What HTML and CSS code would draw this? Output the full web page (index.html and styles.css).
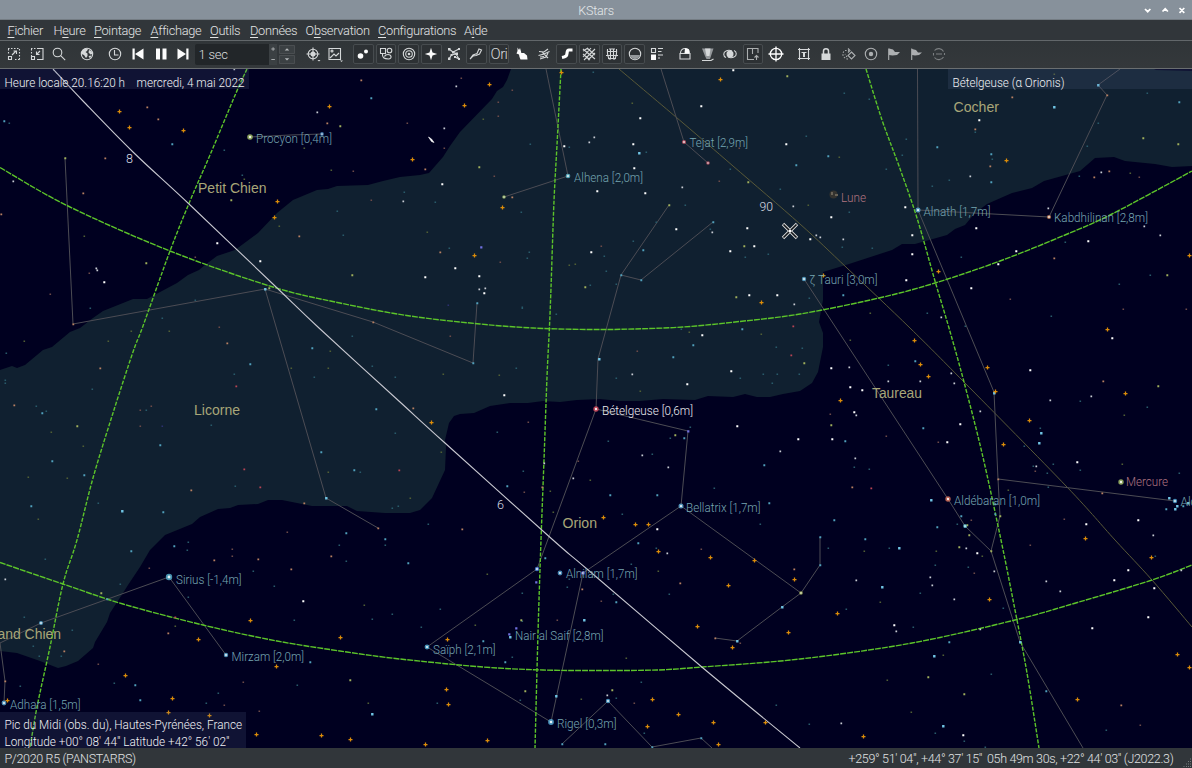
FILE: index.html
```html
<!DOCTYPE html>
<html lang="fr">
<head>
<meta charset="utf-8">
<title>KStars</title>
<link rel="stylesheet" href="styles.css">
</head>
<body>
<div class="window">
  <header class="titlebar">
    <span class="title">KStars</span>
    <svg class="winbtns" viewBox="0 0 48 20" width="48" height="20"><path d="M4 9l2.700 2.700 2.700-2.700M21.500 11.500l2.700-2.700 2.700 2.700M38.500 8l4.800 4.800M43.300 8l-4.800 4.800"/></svg>
  </header>
  <nav class="menubar">
    <span class="m1"><u>F</u>ichier</span><span class="m2">H<u>e</u>ure</span><span class="m3"><u>P</u>ointage</span><span class="m4"><u>A</u>ffichage</span><span class="m5"><u>O</u>utils</span><span class="m6"><u>D</u>onnées</span><span class="m7">O<u>b</u>servation</span><span class="m8"><u>C</u>onfigurations</span><span class="m9">A<u>i</u>de</span>
  </nav>
  <div class="toolbar">
    <i><svg viewBox="0 0 16 16"><path stroke-dasharray="1.500 1.500" d="M2 2.500h12M13.500 3v11M2.500 3v5M9 13.500h5"/><path d="M2.500 10.500h3v3h-3zM6 9l4-4M7.500 5h3v3"/></svg></i>
    <i><svg viewBox="0 0 16 16"><path stroke-dasharray="1.500 1.500" d="M2 2.500h8M2.500 3v7"/><path d="M9 2.500h5v11H8M2.500 10.500h3v3h-3zM11 5L7.500 8.500M7.500 5.500v3h3"/></svg></i>
    <i><svg viewBox="0 0 16 16"><circle cx="6.500" cy="6.500" r="4.300"/><path d="M9.700 9.700l4.500 4.500"/></svg></i>
    <b></b>
    <i><svg viewBox="0 0 16 16"><circle cx="8" cy="8" r="5.700"/><path class="f" d="M3 5l3-2.500 3 .5-1 2-1.500 1 2 1.500v2.500L7 12l-2-3-2.500-1zM10 4l2.500 1 1 3-2 .5-2-2zM9.500 10l3-.5-1.500 3z"/></svg></i>
    <b></b>
    <i><svg viewBox="0 0 16 16"><circle cx="8" cy="8" r="5.700"/><path d="M7.500 4v5h4"/></svg></i>
    <i><svg viewBox="0 0 16 16"><path class="w" d="M2.500 2.500h2.200v11H2.500zM13.500 2.500v11L5 8z"/></svg></i>
    <i><svg viewBox="0 0 16 16"><path class="w" d="M3 2.500h4v11H3zM9.500 2.500h4v11h-4z"/></svg></i>
    <i><svg viewBox="0 0 16 16"><path class="w" d="M11.300 2.500h2.200v11h-2.200zM2.500 2.500v11L11 8z"/></svg></i>
    <div class="step"><span>1 sec</span></div>
    <svg class="spin" viewBox="0 0 8 21" width="8" height="21"><path d="M2.300 5h3.600M4.100 3.300v3.500M2.300 15.500h3.600"/></svg>
    <div class="updown"><svg viewBox="0 0 16 10"><path class="f" d="M5.500 6L8 3.500 10.500 6z"/></svg><svg viewBox="0 0 16 10"><path class="f" d="M5.500 3.500L8 6l2.500-2.500z"/></svg></div>
    <i class="first"><svg viewBox="0 0 16 16"><circle cx="8" cy="8" r="4.800"/><circle class="f" cx="8" cy="8" r="2.500"/><path d="M8 1.500v13M1.500 8h13"/><path class="f" d="M12.500 14l1.500 1.500 1.500-1.500z"/></svg></i>
    <i><svg viewBox="0 0 16 16"><path d="M2 2.500h11.500v11H2zM3 12l4-4 2 2 3-3"/><circle cx="5" cy="5" r="1"/><path class="f" d="M13 14.500l1.500 1.500 1.500-1.500z"/></svg></i>
    <b></b>
    <i class="on"><svg viewBox="0 0 16 16"><circle class="w" cx="5.500" cy="10" r="2.800"/><circle class="w" cx="11" cy="5.500" r="2"/></svg></i>
    <i class="on"><svg viewBox="0 0 16 16"><path d="M2.500 2.500h5v5h-5z"/><circle cx="11.500" cy="4.500" r="2.300"/><path d="M4.500 7.500c-.5 4 1.500 5.500 6 5.500 4-.5 3-4.500-.5-4.500-2 0-3 .5-3.500 2"/></svg></i>
    <i class="on"><svg viewBox="0 0 16 16"><circle cx="8" cy="8" r="5.700"/><circle cx="8" cy="8" r="3.300"/><circle class="f" cx="8" cy="8" r="1.300"/></svg></i>
    <i class="on"><svg viewBox="0 0 16 16"><path class="w" d="M8 1.800L9.500 6.500 14.200 8 9.500 9.500 8 14.200 6.500 9.500 1.800 8l4.700-1.500z"/></svg></i>
    <i><svg viewBox="0 0 16 16"><path d="M3 3l4 3 6-3M7 6l3 2 3 5M5.500 9L3 13M5.500 9L10 8M9 11l4 2"/><path class="f" d="M2 2h2.500v2.500H2zM12 2h2v2h-2zM2 11.500h2.500V14H2zM12 12h2v2h-2zM6 5h2.500v2.500H6zM4.500 8h2v2h-2zM9.500 6.500H12V9H9.500zM8 10h2v2H8z"/></svg></i>
    <i class="on"><svg viewBox="0 0 16 16"><path d="M2 13l3-4 4-1.500L11 3l2.500 1-2 4L8 9.500 5 10z"/></svg></i>
    <i class="on"><span class="ori">Ori</span></i>
    <i><svg viewBox="0 0 16 16"><path class="w" d="M3.500 1.500L5 4 6 2l1 3.500.3 1.500L10 7l3 2.500.5 4H6.500L5.500 11 5 8.500 2.500 7.500 3.500 5z"/></svg></i>
    <i><svg viewBox="0 0 16 16"><path d="M3 5.500l5 .5 4-3M2.500 9.500L8 8l5.500-2.500M4 13l6-2 2-4M12 12l-3-3-3-3M8 10.500l-4 .5"/></svg></i>
    <i class="on"><svg viewBox="0 0 16 16"><path class="river" d="M13.500 4H10c-3 0-1 4.500-3 6-1 .8-2.500 1.200-4 1.500"/></svg></i>
    <i class="on"><svg viewBox="0 0 16 16"><path d="M2 3l12 10M2 8l7 6M6 2l8 7M14 3L3 14M14 7l-7 7M10 2L2 11M2 5l5-3"/></svg></i>
    <i class="on"><svg viewBox="0 0 16 16"><path d="M2 9.500h12M3 5.500h10M4 12.500h8M3.500 3C3 8 4 11 5.500 13.500M6.500 3v10.500M9.500 3v10.500M12.500 3c.5 5-.5 8-2 10.500M5 3h6"/></svg></i>
    <i class="on"><svg viewBox="0 0 16 16"><circle cx="8" cy="8" r="5.700"/><path class="f mute" d="M3 9h10c-1 5.500-9 5.500-10 0z"/></svg></i>
    <i><svg viewBox="0 0 16 16"><path d="M2.500 2.500h4v4h-4zM9 2.500h5M9 5.500h3.500M9 9h5M9 12h2"/><path class="w" d="M2 8.500h5v5.500H2z"/></svg></i>
    <b></b>
    <i><svg viewBox="0 0 16 16"><path d="M3 7.500h10v5.500H3zM3.500 7C3.500 1 12.500 1 12.500 7"/><path class="w" d="M8 2l4 1.500v4H7.500z"/></svg></i>
    <i><svg viewBox="0 0 16 16"><path class="f mute" d="M2 2.500h11.500L11 10l-1 3H6.500L5 10z"/><path class="f" d="M5 2.500h5.500L9.500 10h-3z"/><path d="M2 14.500h9l2.500-1.500"/></svg></i>
    <i><svg viewBox="0 0 16 16"><ellipse class="f" cx="8" cy="8" rx="3.500" ry="3.500"/><path d="M4 11.500C1 10.500 1 6 4 5c2-1 4-1 6 0M12 4.500c3 1 3 5.500 0 6.500-2 1-4 1-6 0"/></svg></i>
    <i class="on"><svg viewBox="0 0 16 16" class="dim"><path d="M13 7V2.500H2.500v11H9M7.500 3v5M11.500 14V9.500M9.500 11.500l2-2 2 2"/></svg></i>
    <i><svg viewBox="0 0 16 16" class="target"><circle cx="8" cy="8" r="5.700"/><path d="M8 .5v15M.5 8h15"/></svg></i>
    <b></b>
    <i><svg viewBox="0 0 16 16"><path d="M3.500 2v12M12.500 2v12M2 3.500h12M2 12.500h12M5.500 6.500h5"/><path class="f" d="M7 6h2v5H7z"/></svg></i>
    <i><svg viewBox="0 0 16 16"><path class="f" d="M3.500 7.500h9V14h-9z"/><path class="shackle" d="M5.500 8V5c0-3 5-3 5 0v3"/></svg></i>
    <i><svg viewBox="0 0 16 16" class="dim"><path stroke-dasharray="1.500 1.500" d="M7 13C2 12.500 0 7 4 4.500h4M6 11L4 8"/><path d="M7 2.500L9 4.500 7 6.500M10.500 6l3.500 3.500-3.500 3.500L7 9.500z"/></svg></i>
    <i><svg viewBox="0 0 16 16" class="dim"><circle cx="8" cy="8" r="5.700"/><circle class="f" cx="8" cy="8" r="2.200"/></svg></i>
    <i><svg viewBox="0 0 16 16" class="dim"><path class="f" d="M3 2.500l4 1 2 2.500h5l-3 3-4.500.5L3 9z"/><path d="M2.700 2.500V14"/></svg></i>
    <i><svg viewBox="0 0 16 16" class="dim"><path class="f" d="M3 3l4 1 2 2.500h4l-3 2.500-4 .5L3 9z"/><path d="M2.700 2.500V14"/></svg></i>
    <i><svg viewBox="0 0 16 16" class="dimmer"><path d="M3.500 4.500a5.500 5.500 0 0 1 9 1M12.500 11a5.500 5.500 0 0 1-9 .5M2.500 7v2.500M13.500 7v2M5 8h6"/></svg></i>
  </div>
  <main class="sky"><svg id="map" viewBox="0 69 1192 679" width="1192" height="679"></svg></main>
  <footer class="status"><span class="left">P/2020 R5 (PANSTARRS)</span><span class="azalt">+259° 51' 04", +44° 37' 15"</span><span class="radec">05h 49m 30s, +22° 44' 03" (J2022.3)</span>
    <svg class="grip" viewBox="0 0 10 10" width="10" height="10"><path d="M8 1h1M6 3.500h1M8 3.500h1M4 6h1M6 6h1M8 6h1M1.500 8.500h1M4 8.500h1M6 8.500h1M8 8.500h1"/></svg>
  </footer>
</div>
<script src="map.js"></script>
</body>
</html>
```
FILE: styles.css
```css
body { margin: 0; background: #000020; font-family: Roboto, "Noto Sans", sans-serif; font-weight: 300; }
.window { width: 1192px; height: 768px; display: flex; flex-direction: column; overflow: hidden; }
.titlebar { height: 20px; flex: none; box-sizing: border-box; background: #87919b; border-bottom: 1px solid #747c83; display: grid; grid-template-columns: 1fr auto 1fr; align-items: center; }
.title { grid-column: 2; font-size: 12.5px; color: #e4e8ea; letter-spacing: -.15px; }
.winbtns { grid-column: 3; justify-self: end; margin-right: 3px; fill: none; stroke: #fff; stroke-width: 1.7; }
.menubar { height: 20px; flex: none; background: #31363a; border-bottom: 1px solid #62676a; display: flex; align-items: center; padding-left: 7.5px; font-size: 12.8px; letter-spacing: -.3px; color: #e2e4e5; white-space: nowrap; }
.menubar span { flex: none; }
.menubar u { text-underline-offset: 2px; text-decoration-thickness: 1px; }
.m1 { width: 46px; } .m2 { width: 40.5px; } .m3 { width: 56.5px; } .m4 { width: 59.5px; } .m5 { width: 40px; }
.m6 { width: 55.5px; } .m7 { width: 72.5px; } .m8 { width: 86px; }
.toolbar { height: 28px; flex: none; box-sizing: border-box; background: linear-gradient(#303538, #34383b); border-bottom: 1px solid #6a6e70; display: flex; align-items: center; padding-left: 2.7px; padding-bottom: 1px; }
.toolbar i { flex: none; width: 20.6px; height: 20px; margin: 0 1px; box-sizing: border-box; display: flex; align-items: center; justify-content: center; font-style: normal; }
.toolbar .on { border: 1px solid #474c4f; border-radius: 2px; background: #2d3134; }
.toolbar b { flex: none; width: 5.5px; }
.toolbar i svg { width: 16px; height: 16px; flex: none; fill: none; stroke: #d5d8d9; stroke-width: 1.1; }
.toolbar i svg .f { fill: #d5d8d9; stroke: none; }
.toolbar i svg .mute { fill: #94989b; }
.toolbar i svg .w { fill: #fcfcfc; stroke: none; }
.toolbar i svg .river { stroke: #fff; stroke-width: 3.2; }
.toolbar i svg .shackle { stroke-width: 1.5; }
.toolbar i svg.target { stroke: #fff; stroke-width: 1.3; }
.toolbar i svg.dim { opacity: .75; }
.toolbar i svg.dimmer { opacity: .45; }
.ori { font-size: 15px; color: #d5d8d9; letter-spacing: -.6px; }
.step { flex: none; width: 74px; height: 21px; margin-left: 1px; background: #222629; border-radius: 2px 0 0 2px; box-sizing: border-box; padding-left: 3px; font-size: 13px; line-height: 22px; color: #dcdedf; letter-spacing: -.2px; }
.spin { flex: none; background: #3b4043; stroke: #a6a9ab; fill: none; stroke-width: 1; }
.updown { width: 16px; margin-left: 2px; display: flex; flex-direction: column; gap: 1px; }
.updown svg { width: 16px; height: 9px; background: #3b4043; border-radius: 1px; box-shadow: inset 0 0 0 1px #4a4e51; fill: #b6b9bb; }
.toolbar .first { margin-left: 7px; }
.sky { height: 679px; flex: none; }
.sky svg { display: block; }
.status { flex: 1; background: #31363a; display: flex; align-items: center; color: #e0e2e3; font-size: 12.5px; letter-spacing: -.34px; white-space: pre; }
.left { padding-left: 4.5px; flex: 1; }
.azalt { width: 138.5px; }
.radec { width: 195px; }
.grip { align-self: flex-end; stroke: #777c7f; stroke-width: 1; }

.milky { fill: #102030; }
.figure { fill: none; stroke: #4c4c54; stroke-width: 1; }
.grid { fill: none; stroke: #5cc42a; stroke-width: 1.4; stroke-dasharray: 4 1.5; }
.grid.parallel { stroke-dasharray: 6 1; }
.equator { fill: none; stroke: #c8c8d0; stroke-width: 1.1; }
.ecliptic { fill: none; stroke: #585838; stroke-width: 1; }
.dso { stroke: #dc8c08; stroke-width: 1.25; fill: none; }
.label { font: 300 13px Roboto, "Noto Sans", sans-serif; fill: #76a6b2; }
.label.bright { fill: #ececf0; }
.label.planet { fill: #b07480; }
.label.deg { fill: #d8dce2; }
.name { font: 14px "Liberation Sans", Arial, sans-serif; fill: #a8a678; }
.box { fill: #5a6c90; fill-opacity: .18; }
.info { font: 300 13px Roboto, "Noto Sans", sans-serif; fill: #f0f2f4; }
```
FILE: map.js
```js
var map = document.getElementById('map');
var NS = 'http://www.w3.org/2000/svg';

function add(tag, attrs, text) {
  var el = document.createElementNS(NS, tag);
  for (var k in attrs) el.setAttribute(k, attrs[k]);
  if (text) el.textContent = text;
  map.appendChild(el);
  return el;
}
function points(s) {
  return s.trim().split(/\s+/).map(function (p) { return p.split(',').map(Number); });
}
// Catmull-Rom curve through the points
function curve(s) {
  var p = points(s), d = 'M' + p[0];
  for (var i = 0; i < p.length - 1; i++) {
    var a = p[i - 1] || p[i], b = p[i], c = p[i + 1], e = p[i + 2] || c;
    d += 'C' + [b[0] + (c[0] - a[0]) / 6, b[1] + (c[1] - a[1]) / 6,
      c[0] - (e[0] - b[0]) / 6, c[1] - (e[1] - b[1]) / 6, c[0], c[1]].join(' ');
  }
  return d;
}

add('rect', { x: 0, y: 69, width: 1192, height: 679, fill: '#000020' });

// Milky Way outline
add('polygon', { 'class': 'milky', points: '511,69 507,80 503,87 497,91 492,99 460,132 450,146 443,157 429,173 420,175 400,177 383,181 368,185 337,186 328,189 317,190 293,200 277,213 258,233 235,250 217,256 205,265 199,270 188,275 177,283 147,299 133,299 103,311 93,318 80,328 70,332 52,347 43,350 25,365 17,368 12,366 0,370 0,651 17,653 40,661 58,668 66,666 78,661 93,648 95,642 107,622 110,613 123,593 128,585 140,567 150,550 165,535 192,524 200,517 218,509 230,508 238,505 258,504 268,500 282,500 312,506 347,506 357,511 385,513 410,513 420,510 432,498 445,470 446,447 445,440 449,423 454,416 460,414 474,413 490,406 510,403 528,403 543,401 560,402 577,400 600,399 620,401 640,401 663,399 695,400 708,396 733,397 745,394 757,397 770,397 783,394 800,391 812,383 818,372 823,347 823,333 819,322 823,300 823,272 849,264 892,250 902,244 915,244 947,235 955,229 965,225 975,213 987,204 1012,193 1032,188 1044,181 1080,171 1095,158 1114,157 1125,161 1155,164 1172,167 1192,166 1192,71 1156,70 1154,69' });

add('path', { 'class': 'ecliptic', d: curve('619,69 683,123 733,166 800,224 847,268 910,328 964,382 1067,487 1115,540 1152,580 1192,627') });

['65,158 73,324 265,289 326,498 378,528', '265,289 373,322 473,363 477,303', '250,137 290,135 322,134',
 '546,69 568,176 504,197', '661,69 684,142 708,163', '669,205 621,275 641,280 713,222',
 '621,275 598,359 596,409 688,431 681,506 801,593 820,565 820,537', '801,593 782,607 737,641 715,638',
 '681,506 583,573 551,722 427,647 537,569 596,409', '917.500,69 918,210 1049,217 1107,95 1098,85 1120,69',
 '918,210 994,392 998,479 1175,501', '998,479 1000,516 991,551', '804,279 948,499 965,526 991,551 1020,642 1083,748',
 '169,577 41,623 0,643 5,681 4,703', '169,577 226,655', '562,744 608,701 652,747 701,738 712,748'
].forEach(function (s) { add('polyline', { 'class': 'figure', points: s }); });

// Declination circles
['0,167.500 68,206 170,251 273,287 340,303 410,316 480,324 533,328 590,329.500 633,329 683,327 735,322 800,314 879,298 935,283 1000,261 1065,235 1112,214 1192,171',
 '0,562.500 63,584 123,604 203,625 277,641 347,652 400,659 483,667 543,670 600,670.500 657,670 702,667 800,659 912,643 1015,620 1079,602 1152,580 1192,565'
].forEach(function (s) { add('path', { 'class': 'grid parallel', d: curve(s) }); });

// Hour circles
['247,69 236,93 210,155 190,201 170,251 143,326 133,352 113,413 93,478 77,540 63,584 50,647 37,707 30,748',
 '561,69 557,145 554,201 551,288 549.500,326 547,377 544,460 541,540 538,633 535,748',
 '866,69 882,120 899,166 917,218 935,281 949,328 964,382 982,453 1001,540 1015,610 1027,673 1039,748'
].forEach(function (s) { add('path', { 'class': 'grid', d: curve(s) }); });

add('path', { 'class': 'equator', d: curve('53,69 83,101 133,152 189,204 275,286 319,328 400,402 445,443 553,540 587,569 703,668 800,748') });

// Field stars by colour: [fill, size, positions]
[
 ['#c8ccd4', 1.7, '13,181 317,112 97,270 234,69 456,86 444,128 403,201 589,142 594,137 682,187 712,232 793,206 479,289 485,288 794,304 970,176 843,239 820,237 816,235 1048,208 1101,172 632,374 780,451 642,455 668,467 573,478 544,463 849,367 856,415 855,458 920,381 951,373 954,383 980,411 888,381 1050,400 1091,396 1036,466 1153,535 5,579 856,580 930,577 932,585 954,599 896,631 980,629 966,548 994,571 1046,581 1060,591 1181,570 841,723 1144,226 1160,235 667,553 607,695 941,317 96,268'],
 ['#fff', 2, '217,243 260,261 104,282 442,184 564,146 640,118 633,144 634,168 597,191 645,193 701,106 733,70 786,144 676,229 747,228 730,251 754,246 591,252 455,268 425,277 479,276 484,293 749,295 777,295 979,120 831,217 905,207 912,235 810,239 912,254 906,280 976,228 1016,251 998,264 971,288 1088,241 504,395 702,335 731,371 687,384 737,426 798,439 657,529 831,368 850,387 862,390 854,412 832,439 960,424 947,442 1030,370 1112,338 1077,462 1086,524 1138,520 303,601 894,625 977,553 1114,580 1128,570 1148,617 1154,588 1092,628 963,735'],
 ['#285a6a', 1.6, '9,123 224,150 242,175 337,211 343,235 90,308 162,318 195,300 569,147 646,152 633,241 710,229 529,252 527,258 590,285 616,284 604,256 606,271 521,212 435,202 449,248 556,314 685,205 745,257 768,254 730,169 780,189 530,144 404,192 656,222 522,307 593,72 902,155 992,159 906,139 844,93 1087,146 1147,93 849,212 809,298 842,247 872,248 927,313 949,180 932,186 886,169 806,136 1051,316 961,257 1098,123 1079,176 1065,242 1150,275 1119,284 975,132 869,99 5,380 5,383 92,389 36,406 46,411 146,410 211,425 234,374 235,486 352,336 372,366 395,377 395,433 360,472 314,377 98,503 392,508 398,506 6,353 740,378 772,383 777,374 776,347 763,374 616,378 516,368 608,441 670,438 690,427 652,454 622,514 523,471 497,432 714,488 760,524 428,524 681,329 522,308 888,365 802,348 799,374 1040,428 1024,446 1053,464 1047,473 1033,466 1048,487 1147,407 1080,401 854,467 869,469 957,524 1080,470 965,326 1179,473 188,542 187,550 45,559 120,584 72,630 39,656 61,656 33,646 114,683 20,686 218,693 206,703 297,685 372,619 294,620 392,614 274,586 339,545 253,571 188,597 24,617 440,609 631,564 613,594 569,579 567,587 522,621 644,733 616,698 776,705 669,594 520,700 512,657 656,548 437,703 641,682 421,627 522,593 889,548 935,565 846,609 913,627 935,733 964,741 809,724 1106,730 1003,608 920,593 991,674 968,567 828,548 1155,556 985,747 385,545 346,561'],
 ['#50a0bc', 1.9, '4,121 371,98 172,144 643,250 796,165 828,156 937,147 991,154 991,182 1179,102 843,295 42,413 52,461 84,475 31,506 163,512 160,445 250,364 312,348 376,409 321,452 354,470 346,533 385,539 742,329 693,345 673,357 684,438 610,495 657,495 764,465 769,503 507,486 915,361 845,441 923,428 961,516 937,527 834,520 820,537 1166,509 1183,506 995,514 995,504 174,546 107,599 140,700 310,662 408,563 545,558 638,543 616,602 483,641 505,662 605,744 865,539 949,642 1046,691 131,551 135,685 473,363 477,303 562,744 652,747 701,738 621,275 641,280 713,222 820,565'],
 ['#70c4e4', 2.4, '639,153 122,511 1054,107 599,359 1041,433 1039,443 931,500 1169,498 1177,506 1188,503 1175,509 372,714 584,620 510,637 899,548 882,587 934,656 943,726 1020,642 265,289 326,498 782,607 737,641 965,526 1098,85 556,696 994,393'],
 ['#7070e0', 2.2, '481,247 536,582 509,634 516,628 688,431'],
 ['#2c3070', 1.6, '448,305 162,426'],
 ['#6c4a48', 1.6, '195,257 371,200 50,294 89,273 353,171 461,78 494,176 500,262 407,123 601,246 719,181 739,148 512,90 498,102 498,116 444,148 1139,177 1010,299 1123,309 1186,309 151,406 140,426 140,410 219,327 287,532 528,422 524,492 637,351 450,336 578,461 938,442 1035,471 971,520 830,414 1064,519 886,436 232,556 232,549 149,568 98,664 243,682 259,711 224,705 701,549 557,620 634,703 601,601 1030,545 1140,725 974,573 740,643'],
 ['#b88062', 1.8, '147,107 158,119 105,158 83,193 361,80 327,123 299,236 1,214 373,322 425,169 512,197 440,252 1012,97 975,129 990,166 1094,177 1109,171 1054,258 227,343 14,405 100,368 304,503 413,408 462,529 542,487 852,487 214,560 258,559 291,569 331,556 168,633 64,651 680,583 582,589 715,638 794,569 1121,705 1103,381 1102,493 998,479 5,681 378,528 73,324 191,490 1107,95'],
 ['#b84454', 1.8, '260,487 244,469 236,386 399,470 793,326 791,355 871,488 175,617'],
 ['#505f34', 1.6, '304,148 84,236 279,226 244,179 331,170 569,265 427,232 483,119 632,103 575,264 839,157 808,205 870,313 1130,173 1054,74 24,341 108,341 169,331 131,331 83,446 67,478 291,368 330,351 328,368 328,472 51,432 441,452 443,374 499,375 640,391 761,334 410,498 590,480 550,491 553,512 689,332 1124,415 1008,490 1122,464 850,340 368,703 364,605 175,626 487,574 658,571 581,699 475,625 626,658 936,551 864,551 943,655 887,680 880,602 911,712 982,556 38,519 28,477'],
 ['#a0b05c', 1.9, '340,126 231,200 146,263 352,275 65,158 479,167 748,182 744,246 585,287 736,297 787,76 1143,138 1178,144 1167,275 77,426 675,435 831,425 804,363 1158,386 969,535 967,525 1000,516 101,593 350,680 521,620 525,691 612,690 959,547 928,677 964,694 991,551 269,288 669,205']
].forEach(function (g) {
  var d = '';
  points(g[2]).forEach(function (p) {
    d += 'M' + (p[0] + .3 - g[1] / 2) + ' ' + (p[1] + .3 - g[1] / 2) + 'h' + g[1] + 'v' + g[1] + 'h-' + g[1] + 'z';
  });
  add('path', { d: d, fill: g[0] });
});

// Bright named stars: x, y, radius, fill
[[250,137,2.800,'#a8c468'],[322,134,1.900,'#4c90c8'],[568,176,2.300,'#68c4d8'],[684,142,2.100,'#d05868'],[708,163,1.800,'#c85868'],
 [504,197,1.800,'#a0c068'],[918,210,2.500,'#64b4dc'],[1049,217,2.100,'#d08860'],[804,279,2.200,'#64b4dc'],[596,409,2.700,'#e04c60'],
 [681,506,2.500,'#64b4dc'],[948,499,2.700,'#dc7058'],[169,577,3.200,'#58b8d4'],[226,655,2.200,'#64b4dc'],[41,623,2,'#64b4dc'],
 [4,703,2.400,'#64b4dc'],[560,573,2.400,'#58a8d8'],[537,569,2.200,'#5890e8'],[583,573,2,'#6464e0'],[427,647,2.400,'#58b8e0'],
 [551,722,2.900,'#58b0dc'],[608,701,2.200,'#58b0dc'],[1175,501,2.200,'#58b0dc'],[1121,482,2.700,'#a8c468'],[801,593,1.800,'#b0c060'],[965,526,1.900,'#60c0d0']
].forEach(function (s) {
  add('circle', { cx: s[0], cy: s[1], r: s[2], fill: s[3], 'fill-opacity': .8 });
  add('circle', { cx: s[0], cy: s[1], r: s[2] * .45, fill: '#fff', 'fill-opacity': .85 });
});

// Deep-sky markers
var dso = '';
points('119,111 129,127 183,130 329,106 277,201 274,217 489,84 464,105 412,159 502,207 474,255 561,72 720,79 761,302 1006,160 823,275 938,271 1189,255 431,422 603,517 635,524 648,524 914,340 920,364 928,376 840,400 987,367 995,391 1029,420 1003,444 1107,329 1125,393 1085,538 250,620 198,639 125,675 172,698 168,712 276,666 209,715 256,734 321,735 350,739 340,637 7,700 658,551 710,557 754,560 728,585 794,579 697,626 788,632 732,647 652,699 678,714 713,722 647,726 765,722 718,744 447,639 446,689 448,704 425,744 487,740 837,613 989,599 1151,557 1077,699 863,736 1177,654 1189,667').forEach(function (p) {
  dso += 'M' + (p[0] - 1.500) + ' ' + (p[1] + .5) + 'h4M' + (p[0] + .5) + ' ' + (p[1] - 1.500) + 'v4';
});
add('path', { 'class': 'dso', d: dso });

// Comet, Moon and focus cross
add('path', { d: 'M428.500 137l3 2 2.500 3.500-2.500-1z', fill: '#fff', stroke: '#fff', 'stroke-width': .6 });
add('circle', { cx: 833.500, cy: 194.500, r: 4, fill: '#34332f' });
add('path', { d: 'M831 192h2v3h-2zM835 194h3v2h-3z', fill: '#686256' });
add('path', { d: 'M783 224l14 14M797 224l-14 14', stroke: '#d8d8d8', 'stroke-width': 3.400 });
add('path', { d: 'M783.500 224.500l13 13M796.500 224.500l-13 13', stroke: '#101418', 'stroke-width': 1.600 });
add('circle', { cx: 790, cy: 231, r: 1.500, fill: '#fff' });

// Labels: text, left, baseline, width, variant
[['Procyon [0,4m]',256,143,76],['Tejat [2,9m]',689.500,146.500,58.500],['Alhena [2,0m]',574,181.500,69],['Alnath [1,7m]',923.500,216,67],
 ['Kabdhilinan [2,8m]',1054,221.500,94],['ζ Tauri [3,0m]',809.500,284,68],['Bételgeuse [0,6m]',602,415,91,'bright'],
 ['Bellatrix [1,7m]',686,511.500,74.500],['Aldébaran [1,0m]',954,505,86],['Sirius [-1,4m]',176,584,65.500],['Mirzam [2,0m]',231.500,661,72.500],
 ['Adhara [1,5m]',10,709,70.500],['Alnilam [1,7m]',566,578,71.500],['Nair al Saif [2,8m]',515,639.500,88.500],['Saïph [2,1m]',433,653.500,62.500],
 ['Rigel [0,3m]',557,728,59.500],['Lune',841,201.500,25,'planet'],['Mercure',1126,486,42,'planet'],['Alcyone',1180.500,506,41],
 ['8',126,163,7,'deg'],['90',759.500,211,13.500,'deg'],['6',497,509,7,'deg']
].forEach(function (l) {
  add('text', { 'class': 'label ' + (l[4] || ''), x: l[1], y: l[2], textLength: l[3], lengthAdjust: 'spacingAndGlyphs' }, l[0]);
});
[['Petit Chien',198,193,68.500],['Licorne',194,415,46],['Cocher',953.500,112,45.500],['Orion',562.500,528,34.500],['Taureau',872,398,50],['Grand Chien',-18,639,79]
].forEach(function (l) { add('text', { 'class': 'name', x: l[1], y: l[2], textLength: l[3], lengthAdjust: 'spacingAndGlyphs' }, l[0]); });

// Info boxes
add('rect', { 'class': 'box', x: 0, y: 69, width: 249, height: 20 });
add('rect', { 'class': 'box', x: 948, y: 69, width: 244, height: 20 });
add('rect', { 'class': 'box', x: 0, y: 712, width: 246, height: 36 });
[['Heure locale 20.16:20 h',4.500,86.500,120.500],['mercredi, 4 mai 2022',136.500,86.500,108],['Bételgeuse (α Orionis)',952.500,86.500,112],
 ['Pic du Midi (obs. du), Hautes-Pyrénées, France',4.500,729,237.500],['Longitude +00° 08\' 44" Latitude +42° 56\' 02"',4.500,745.500,225]
].forEach(function (l) { add('text', { 'class': 'info', x: l[1], y: l[2], textLength: l[3], lengthAdjust: 'spacingAndGlyphs' }, l[0]); });
```
